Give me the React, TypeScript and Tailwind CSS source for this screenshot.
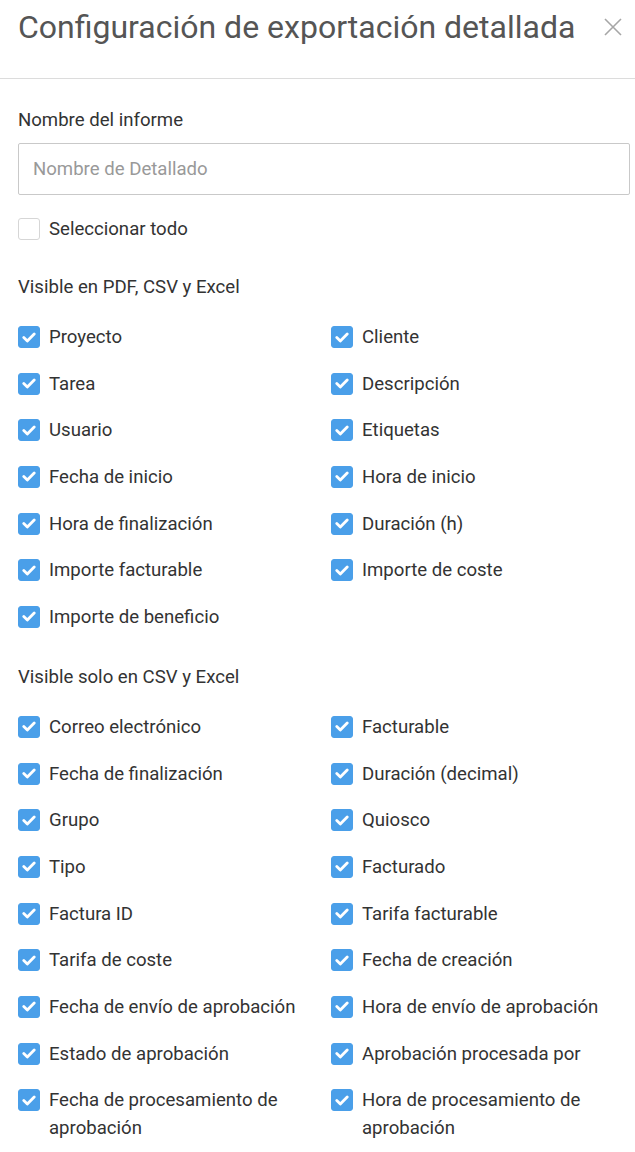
import { useState } from "react"

const PDF_FIELDS: [string, string | null][] = [
  ["Proyecto", "Cliente"],
  ["Tarea", "Descripción"],
  ["Usuario", "Etiquetas"],
  ["Fecha de inicio", "Hora de inicio"],
  ["Hora de finalización", "Duración (h)"],
  ["Importe facturable", "Importe de coste"],
  ["Importe de beneficio", null],
];

const CSV_FIELDS: [string, string | null][] = [
  ["Correo electrónico", "Facturable"],
  ["Fecha de finalización", "Duración (decimal)"],
  ["Grupo", "Quiosco"],
  ["Tipo", "Facturado"],
  ["Factura ID", "Tarifa facturable"],
  ["Tarifa de coste", "Fecha de creación"],
  ["Fecha de envío de aprobación", "Hora de envío de aprobación"],
  ["Estado de aprobación", "Aprobación procesada por"],
  ["Fecha de procesamiento de aprobación", "Hora de procesamiento de aprobación"],
];

function Check({ checked, label, onToggle }: { checked: boolean; label: string; onToggle: () => void }) {
  return (
    <label className="flex items-start gap-[9px] cursor-pointer select-none">
      <span
        onClick={onToggle}
        className={`mt-[3px] flex h-[22px] w-[22px] flex-shrink-0 items-center justify-center rounded-[3px] border ${
          checked ? "bg-[#4a9fe9] border-[#4a9fe9]" : "bg-white border-[#d6d6d6]"
        }`}
      >
        {checked && (
          <svg width="14" height="11" viewBox="0 0 14 11" fill="none">
            <path d="M1.8 5.6 5.3 9 12.2 2" stroke="white" strokeWidth="2.8" strokeLinecap="round" strokeLinejoin="round" />
          </svg>
        )}
      </span>
      <span className="text-[18.6px] leading-[28px] text-[#333]">{label}</span>
    </label>
  );
}

function Section({ title, rows, state, toggle }: {
  title: string;
  rows: [string, string | null][];
  state: Record<string, boolean>;
  toggle: (k: string) => void;
}) {
  return (
    <div>
      <div className="text-[18.6px] leading-[28px] text-[#333] mb-[22px]">{title}</div>
      <div className="grid grid-cols-[313px_1fr] gap-y-[18.67px]">
        {rows.map(([a, b]) => (
          <div key={a} className="contents">
            <div className="pr-[10px]">
              <Check checked={state[a] ?? true} label={a} onToggle={() => toggle(a)} />
            </div>
            <div>
              {b && <Check checked={state[b] ?? true} label={b} onToggle={() => toggle(b)} />}
            </div>
          </div>
        ))}
      </div>
    </div>
  );
}

export default function App() {
  const [nombre, setNombre] = useState("");
  const [todo, setTodo] = useState(false);
  const [state, setState] = useState<Record<string, boolean>>({});

  const toggle = (k: string) => setState((s) => ({ ...s, [k]: !(s[k] ?? true) }));

  return (
    <div className="min-h-screen bg-white font-['Roboto',sans-serif]">
      {/* Cabecera */}
      <div className="flex items-start justify-between border-b border-[#dcdcdc] pl-[18px] pr-[13px] pt-[9px] pb-[33px]">
        <h1 className="text-[32px] leading-[36px] font-normal text-[#555] whitespace-nowrap">
          Configuración de exportación detallada
        </h1>
        <button type="button" className="mt-[9px] text-[#a6a6a6]">
          <svg width="18" height="18" viewBox="0 0 18 18" fill="none">
            <path d="M1 1 17 17M17 1 1 17" stroke="currentColor" strokeWidth="1.6" />
          </svg>
        </button>
      </div>

      <div className="pl-[18px] pr-[5px] pt-[27px] pb-[20px]">
        <div className="text-[18.6px] leading-[28px] text-[#333]">Nombre del informe</div>
        <input
          value={nombre}
          onChange={(e) => setNombre(e.target.value)}
          placeholder="Nombre de Detallado"
          className="mt-[9px] block h-[52px] w-full rounded-[2px] border border-[#c9c9c9] px-[14px] text-[18.6px] text-[#333] placeholder:text-[#999] outline-none"
        />

        <div className="mt-[20px]">
          <Check checked={todo} label="Seleccionar todo" onToggle={() => setTodo(!todo)} />
        </div>

        <div className="mt-[30px]">
          <Section title="Visible en PDF, CSV y Excel" rows={PDF_FIELDS} state={state} toggle={toggle} />
        </div>

        <div className="mt-[32px]">
          <Section title="Visible solo en CSV y Excel" rows={CSV_FIELDS} state={state} toggle={toggle} />
        </div>
      </div>
    </div>
  );
}
